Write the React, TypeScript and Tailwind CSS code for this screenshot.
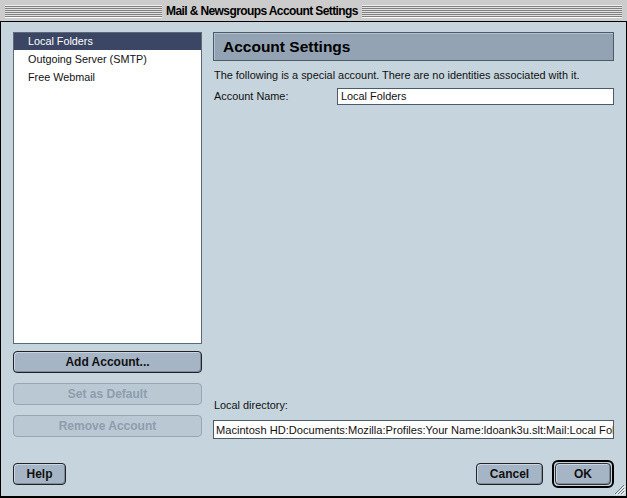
import React from 'react';

const Stripes = ({ className = '' }: { className?: string }) => (
  <div
    className={`h-[13px] border-t border-[#eee] bg-[repeating-linear-gradient(to_bottom,#808080_0px,#808080_1px,#e2e2e2_1px,#e2e2e2_2px)] border-b border-b-[#fff] ${className}`}
  />
);

const MacButton = ({
  label,
  disabled,
  className = '',
}: {
  label: string;
  disabled?: boolean;
  className?: string;
}) => (
  <button
    type="button"
    className={`flex h-[22px] items-center justify-center rounded-[4px] border text-[12px] font-bold ${
      disabled
        ? 'border-[#98a7b6] bg-[#b9c8d3] text-[#8e9dad]'
        : 'border-[#222] bg-[#a6b5c6] text-[#111] shadow-[inset_1px_1px_0_#c9d5e0,inset_-1px_-1px_0_#7d8c9c]'
    } ${className}`}
  >
    {label}
  </button>
);

export default function App() {
  return (
    <div className="flex h-[498px] w-[627px] flex-col bg-[#cccccc] font-['Liberation_Sans',Arial,sans-serif] text-[#111]">
      {/* title bar */}
      <div className="flex h-[22px] shrink-0 items-center gap-[4px] border-b border-black px-[5px] pt-[1px]">
        <Stripes className="w-[157px] shrink-0" />
        <div className="whitespace-nowrap text-[12px] font-bold tracking-[-0.6px] text-black">
          Mail &amp; Newsgroups Account Settings
        </div>
        <Stripes className="flex-1" />
      </div>

      {/* body */}
      <div className="relative flex flex-1 flex-col border-x border-b-2 border-black bg-[#c6d5dd] px-[12px] pt-[10px]">
        <div className="flex h-[408px] gap-[11px]">
          {/* left column */}
          <div className="flex w-[189px] shrink-0 flex-col">
            <div className="h-[312px] border border-[#5c6a78] bg-white text-[10.8px]">
              <div className="flex h-[17px] items-center bg-[#3b4664] pl-[14px] text-white">Local Folders</div>
              <div className="flex h-[18px] items-center pl-[14px]">Outgoing Server (SMTP)</div>
              <div className="flex h-[18px] items-center pl-[14px]">Free Webmail</div>
            </div>
            <MacButton label="Add Account..." className="mt-[7px] w-full" />
            <MacButton label="Set as Default" disabled className="mt-[10px] w-full" />
            <MacButton label="Remove Account" disabled className="mt-[10px] w-full" />
          </div>

          {/* right column */}
          <div className="flex min-w-0 flex-1 flex-col text-[10.9px]">
            <div className="flex h-[29px] items-center border border-[#4d5b69] bg-[#93a3b3] pl-[9px] text-[15.5px] font-bold text-black shadow-[inset_1px_1px_0_#b3c1cd]">
              Account Settings
            </div>
            <div className="mt-[7px] pl-[1px] leading-[14px]">
              The following is a special account. There are no identities associated with it.
            </div>
            <div className="mt-[6px] flex items-center">
              <div className="w-[124px] pl-[1px]">Account Name:</div>
              <div className="flex h-[17px] flex-1 items-center border border-[#4d5b69] bg-white pl-[3px]">
                Local Folders
              </div>
            </div>
            <div className="flex-1" />
            <div className="pl-[1px] leading-[14px]">Local directory:</div>
            <input
              readOnly
              value="Macintosh HD:Documents:Mozilla:Profiles:Your Name:ldoank3u.slt:Mail:Local Folders"
              className="mb-[1px] mt-[8px] h-[19px] w-full border border-[#4d5b69] bg-white pl-[2px] text-[11.1px] text-[#111] outline-none"
            />
          </div>
        </div>

        {/* bottom buttons */}
        <div className="mt-[20px] flex items-center">
          <MacButton label="Help" className="w-[53px]" />
          <div className="flex-1" />
          <MacButton label="Cancel" className="w-[67px]" />
          <div className="ml-[9px] rounded-[6px] border-2 border-black p-[1px]">
            <MacButton label="OK" className="h-[20px] w-[56px] border-[#333]" />
          </div>
        </div>

        {/* resize grip */}
        <svg className="absolute bottom-[1px] right-[1px]" width="12" height="12" viewBox="0 0 12 12">
          <path d="M11 2 L2 11 M11 5 L5 11 M11 8 L8 11" stroke="#6a7886" strokeWidth="1" />
          <path d="M12 3 L3 12 M12 6 L6 12 M12 9 L9 12" stroke="#ffffff" strokeWidth="1" />
        </svg>
      </div>
    </div>
  );
}
